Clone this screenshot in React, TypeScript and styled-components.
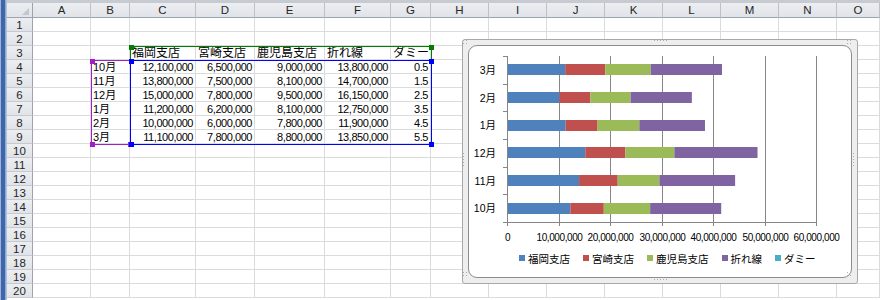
import React from 'react'
import styled, { createGlobalStyle } from 'styled-components'

const GlobalStyle = createGlobalStyle`
  html, body {
    margin: 0;
    padding: 0;
    background: #fff;
  }
  body {
    width: 880px;
    height: 300px;
    overflow: hidden;
    font-family: "Liberation Sans", "Noto Sans CJK JP", sans-serif;
  }
`

const colWidths = [58, 39, 66, 59, 70, 66, 40, 58, 58, 58, 58, 58, 58, 58]
const colNames = 'ABCDEFGHIJKLMNO'.split('')
const ROWS = 20

const months = ['10月', '11月', '12月', '1月', '2月', '3月']

const series = [
  { name: '福岡支店', color: '#4f81bd', values: [12100000, 13800000, 15000000, 11200000, 10000000, 11100000] },
  { name: '宮崎支店', color: '#c0504d', values: [6500000, 7500000, 7800000, 6200000, 6000000, 7800000] },
  { name: '鹿児島支店', color: '#9bbb59', values: [9000000, 8100000, 9500000, 8100000, 7800000, 8800000] },
  { name: '折れ線', color: '#8064a2', values: [13800000, 14700000, 16150000, 12750000, 11900000, 13850000] },
  { name: 'ダミー', color: '#4bacc6', values: [0.5, 1.5, 2.5, 3.5, 4.5, 5.5] },
]

const fmt = (v: number) => (v < 100 ? v.toFixed(1) : v.toLocaleString('en-US'))

// what sits in a cell: row is 1-based like Excel, col 0 = A
const cellContent = (row: number, col: number): { text: string, kind: 'head' | 'num' | 'label' } | null => {
  if (row === 3 && col >= 2 && col <= 6) return { text: series[col - 2].name, kind: 'head' }
  if (row >= 4 && row <= 9) {
    const i = row - 4
    if (col === 1) return { text: months[i], kind: 'label' }
    if (col >= 2 && col <= 6) return { text: fmt(series[col - 2].values[i]), kind: 'num' }
  }
  return null
}

// dotted grips of the selected chart, drawn as copies of one dot
const gripDots = (() => {
  const dots: [number, number][] = []
  const corner = (x: number, y: number) => {
    dots.push([x, y], [x + 3, y], [x, y + 3], [x + 3, y + 3])
  }
  corner(1, 1)
  corner(385, 1)
  corner(1, 233)
  corner(385, 233)
  for (let i = 0; i < 5; i++) {
    dots.push([192 + i * 3, 1], [192 + i * 3, 240])
    dots.push([1, 114 + i * 3], [391, 114 + i * 3])
  }
  return dots.map(([x, y]) => `${x}px ${y}px 0 #adadad`).join(', ')
})()

const Window = styled.div`
  position: relative;
  display: flex;
  width: 880px;
  height: 300px;
  overflow: hidden;
`

const SideStrip = styled.div`
  width: 7px;
  flex-shrink: 0;
  background: linear-gradient(to right, #9db4da 0, #9db4da 1px, #3f66aa 1px, #3f66aa 5px, #7f9ccc 5px, #c3cfdf 7px);
`

const Main = styled.div`
  flex: 1;
  min-width: 0;
  display: flex;
  flex-direction: column;
`

const TopBand = styled.div`
  height: 3px;
  background: #c6cad1;
`

const Grid = styled.div`
  display: grid;
  grid-template-columns: 26px ${colWidths.map(w => `${w}px`).join(' ')} 1fr;
  grid-template-rows: 15px repeat(${ROWS}, 14px);
`

const HeaderCell = styled.div<{ $side?: boolean }>`
  position: relative;
  box-sizing: border-box;
  background: linear-gradient(#eceef1, #e0e3e8);
  border-right: 1px solid ${({ $side }) => ($side ? '#9ea4ad' : '#bcc1c8')};
  border-bottom: 1px solid ${({ $side }) => ($side ? '#c6cad0' : '#9ea4ad')};
  color: #262626;
  font-size: 11.5px;
  line-height: 14px;
  text-align: center;
  overflow: hidden;
`

const CornerCell = styled(HeaderCell)`
  border-right-color: #9ea4ad;
  &::after {
    content: '';
    position: absolute;
    right: 3px;
    bottom: 2px;
    border-style: solid;
    border-width: 0 0 7px 7px;
    border-color: transparent transparent #c3c8cf transparent;
  }
`

const Cell = styled.div<{ $kind?: 'head' | 'num' | 'label' }>`
  box-sizing: border-box;
  border-right: 1px solid #dadbdc;
  border-bottom: 1px solid #dadbdc;
  padding: 0 2px;
  color: #000;
  white-space: nowrap;
  overflow: hidden;
  line-height: 14px;
  font-size: ${({ $kind }) => ($kind === 'head' ? '12px' : '11px')};
  letter-spacing: ${({ $kind }) => ($kind === 'num' ? '-0.45px' : '0')};
  text-align: ${({ $kind }) => ($kind === 'num' ? 'right' : 'left')};
`

type Corners = { tr?: boolean, bl?: boolean, br?: boolean }

// a highlighted data range with its square handles at the corners
const RangeBox = styled.div<{ $color: string, $x: number, $y: number, $w: number, $h: number, $corners: Corners }>`
  position: absolute;
  left: ${({ $x }) => $x}px;
  top: ${({ $y }) => $y}px;
  width: ${({ $w }) => $w}px;
  height: ${({ $h }) => $h}px;
  box-sizing: border-box;
  border: 1px solid ${({ $color }) => $color};
  pointer-events: none;

  &::before {
    content: '';
    position: absolute;
    left: -2px;
    top: -2px;
    width: 5px;
    height: 5px;
    background: ${({ $color }) => $color};
    box-shadow: ${({ $color, $w, $h, $corners }) => [
      $corners.tr ? `${$w - 2}px 0 0 ${$color}` : '',
      $corners.bl ? `0 ${$h - 2}px 0 ${$color}` : '',
      $corners.br ? `${$w - 2}px ${$h - 2}px 0 ${$color}` : '',
    ].filter(Boolean).join(', ') || 'none'};
  }
`

const ChartFrame = styled.div`
  position: absolute;
  left: 462px;
  top: 39px;
  width: 396px;
  height: 245px;
  box-sizing: border-box;
  padding: 5px;
  background: #eeeeee;
  border: 1px solid #a8a8a8;
  border-radius: 3px;

  &::after {
    content: '';
    position: absolute;
    left: -1px;
    top: -1px;
    width: 1px;
    height: 1px;
    box-shadow: ${gripDots};
  }
`

const ChartPanel = styled.div`
  box-sizing: border-box;
  height: 100%;
  background: #fff;
  border: 1px solid #8d8d8d;
  border-radius: 9px;
  display: flex;
  flex-direction: column;
`

const PlotSvg = styled.svg`
  display: block;
  flex-shrink: 0;
`

const AxisText = styled.text`
  font-family: "Liberation Sans", "Noto Sans CJK JP", sans-serif;
  font-size: 10px;
  letter-spacing: -0.4px;
  fill: #000;
`

const CatText = styled.text`
  font-family: "Liberation Sans", "Noto Sans CJK JP", sans-serif;
  font-size: 10.5px;
  fill: #000;
`

const Legend = styled.div`
  display: flex;
  align-items: center;
  gap: 13px;
  height: 24px;
  padding-left: 50px;
`

const LegendItem = styled.div`
  display: flex;
  align-items: center;
  gap: 3px;
  font-family: "Noto Sans CJK JP", sans-serif;
  font-size: 10.5px;
  color: #000;
  white-space: nowrap;
`

const LegendMark = styled.span<{ $color: string }>`
  width: 6px;
  height: 6px;
  background: ${({ $color }) => $color};
`

// plot geometry, relative to the white chart panel
const PX0 = 38
const PY0 = 10
const PY1 = 176
const SCALE = 309 / 60000000
const BAND = (PY1 - PY0) / 6
const BAR_H = 11

function BarChart() {
  const grid = [0, 1, 2, 3, 4, 5, 6]
  return (
    <PlotSvg width={382} height={200}>
      {grid.map(k => {
        const x = Math.round(PX0 + k * 51.5) + 0.5
        return (
          <g key={k}>
            <line x1={x} x2={x} y1={PY0} y2={PY1 + 4} stroke="#868686" strokeWidth={1} />
            <AxisText x={x} y={195} textAnchor="middle">
              {k === 0 ? '0' : (k * 10000000).toLocaleString('en-US')}
            </AxisText>
          </g>
        )
      })}
      {grid.map(k => {
        const y = Math.round(PY0 + k * BAND) + 0.5
        return <line key={k} x1={PX0 - 4} x2={PX0 + 0.5} y1={y} y2={y} stroke="#868686" />
      })}
      <line x1={PX0 + 0.5} x2={PX0 + 0.5} y1={PY0} y2={PY1} stroke="#868686" />
      <line x1={PX0} x2={PX0 + 310} y1={PY1 + 0.5} y2={PY1 + 0.5} stroke="#868686" />
      {months.map((m, i) => {
        const band = 5 - i
        const cy = PY0 + band * BAND + BAND / 2
        let acc = 0
        return (
          <g key={m}>
            {series.map(s => {
              const v = s.values[i] < 100 ? 0 : s.values[i]
              const x = PX0 + 1 + acc * SCALE
              acc += v
              return <rect key={s.name} x={x} y={Math.round(cy - BAR_H / 2)} width={v * SCALE} height={BAR_H} fill={s.color} />
            })}
            <CatText x={27} y={cy + 4} textAnchor="end">{m}</CatText>
          </g>
        )
      })}
    </PlotSvg>
  )
}

export default function App() {
  const rows = Array.from({ length: ROWS }, (_, i) => i + 1)
  return (
    <Window>
      <GlobalStyle />
      <SideStrip />
      <Main>
        <TopBand />
        <Grid>
          <CornerCell />
          {colNames.map(c => <HeaderCell key={c}>{c}</HeaderCell>)}
          {rows.map(r => (
            <React.Fragment key={r}>
              <HeaderCell $side>{r}</HeaderCell>
              {colNames.map((c, ci) => {
                const content = cellContent(r, ci)
                return <Cell key={c} $kind={content?.kind}>{content?.text}</Cell>
              })}
            </React.Fragment>
          ))}
        </Grid>
      </Main>

      <RangeBox $color="#008000" $x={130} $y={46} $w={302} $h={15} $corners={{ tr: true }} />
      <RangeBox $color="#a020c8" $x={91} $y={60} $w={40} $h={85} $corners={{ bl: true, br: true }} />
      <RangeBox $color="#0000ff" $x={130} $y={60} $w={302} $h={85} $corners={{ tr: true, bl: true, br: true }} />

      <ChartFrame>
        <ChartPanel>
          <BarChart />
          <Legend>
            {series.map(s => (
              <LegendItem key={s.name}>
                <LegendMark $color={s.color} />
                {s.name}
              </LegendItem>
            ))}
          </Legend>
        </ChartPanel>
      </ChartFrame>
    </Window>
  )
}
